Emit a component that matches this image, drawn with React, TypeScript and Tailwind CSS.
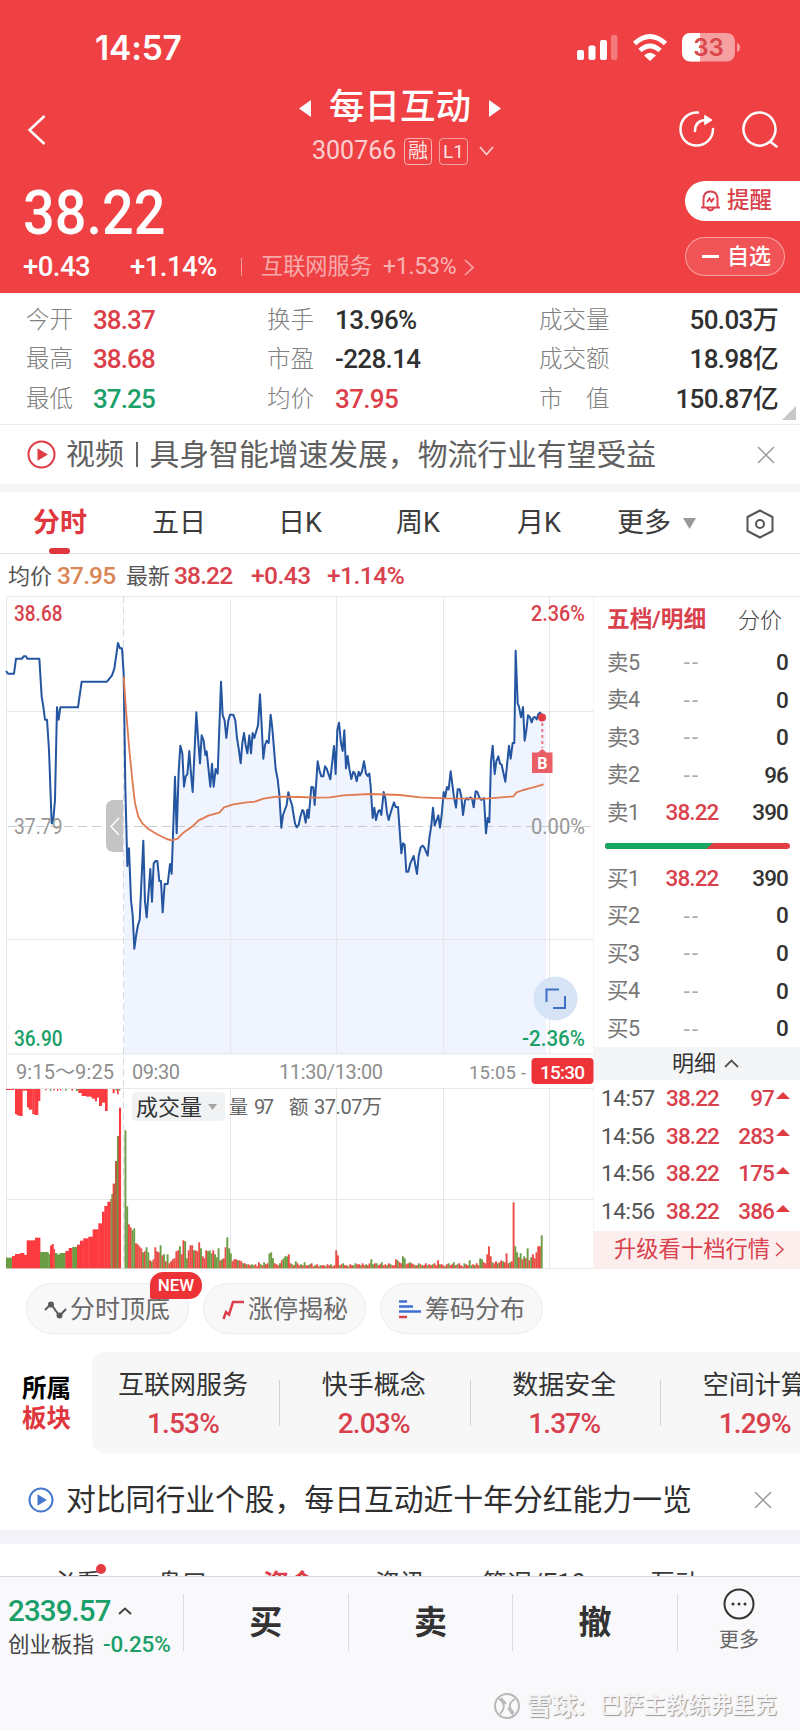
import React from "react";

const RED = "#d9414d";
const GREEN = "#1ba06a";

const font = "font-[Roboto,'Noto_Sans_CJK_SC',sans-serif]";

const stats = [
  ["今开", "38.37", "text-[#dc3f4a]", "换手", "13.96%", "text-[#303030]", "成交量", "50.03万"],
  ["最高", "38.68", "text-[#dc3f4a]", "市盈", "-228.14", "text-[#303030]", "成交额", "18.98亿"],
  ["最低", "37.25", "text-[#1ba06a]", "均价", "37.95", "text-[#dc3f4a]", "市　值", "150.87亿"],
];

const sells = [
  ["卖5", "--", "0"],
  ["卖4", "--", "0"],
  ["卖3", "--", "0"],
  ["卖2", "--", "96"],
  ["卖1", "38.22", "390"],
];

const buys = [
  ["买1", "38.22", "390"],
  ["买2", "--", "0"],
  ["买3", "--", "0"],
  ["买4", "--", "0"],
  ["买5", "--", "0"],
];

const trades = [
  ["14:57", "97"],
  ["14:56", "283"],
  ["14:56", "175"],
  ["14:56", "386"],
];

const sectors = [
  ["互联网服务", "1.53%"],
  ["快手概念", "2.03%"],
  ["数据安全", "1.37%"],
  ["空间计算", "1.29%"],
];

// price curve, in thirds of a pixel
const price =
  "M18 243 L24 251 H42 L48 206 H66 L71 199 H78 L82 206 H118 L125 320 L130 350 L135 389 H141 L147 480 L155 700 H159 L165 630 L171 352 L176 389 L181 352 H234 L245 275 H321 L336 256 L343 236 L354 159 L360 175 H366 L371 250 L376 590 L382 828 L387 775 L393 930 L398 975 L403 1076 L409 1032 L414 1005 L419 990 L430 752 L435 935 L440 982 L451 837 L456 935 L461 820 L467 813 H472 L478 873 H483 L488 967 L494 882 H503 L510 822 L515 851 L525 560 L530 730 L536 545 L541 467 L547 490 L552 590 L557 559 L562 553 L568 483 L573 552 L578 606 L589 367 L594 443 L600 520 L605 436 L611 452 L616 495 L620 484 L631 590 L636 521 L641 590 L647 537 L653 551 L663 275 L668 375 L674 392 L679 444 L685 392 L690 374 H700 L706 392 L711 444 L716 475 L722 520 L727 459 L732 429 L737 465 L742 490 L748 436 L753 490 L758 429 L763 444 L774 406 L780 313 L785 406 L790 506 L795 465 L800 452 L806 459 L812 374 L817 415 L827 537 L833 568 L838 613 L844 713 L849 675 L860 645 L865 607 L871 630 L876 645 L885 700 L890 712 L896 705 L901 680 L907 660 L911 664 L917 698 L922 659 L926 684 L934 591 L940 592 L944 645 L953 514 L959 544 L964 559 L970 559 L975 529 L980 536 L991 568 L1002 468 L1007 552 L1012 420 L1017 398 L1023 459 L1028 483 L1033 421 L1038 535 L1043 498 L1048 536 L1054 567 L1060 545 L1065 551 L1070 574 L1076 545 L1080 557 L1086 544 L1092 514 L1098 551 L1103 558 L1108 551 L1112 590 L1118 684 L1123 653 L1128 690 L1134 665 L1139 660 L1144 675 L1151 606 L1156 625 L1161 668 L1166 690 L1172 668 L1177 652 L1182 637 L1187 651 H1194 L1204 790 L1209 760 L1214 765 L1219 845 H1225 L1231 820 L1241 798 L1251 852 L1256 798 L1262 772 L1268 767 L1273 773 L1283 797 L1288 745 L1294 706 L1299 653 L1304 706 L1315 676 L1320 713 L1325 675 L1331 606 L1335 624 L1341 591 L1346 598 L1352 544 L1357 583 L1362 622 L1368 653 L1373 598 H1379 L1384 620 L1389 675 L1395 632 L1400 624 L1405 629 L1411 622 L1416 626 L1421 652 L1427 604 L1432 606 L1438 622 L1444 630 L1452 624 L1458 730 L1463 684 L1468 697 L1473 514 L1478 467 L1484 552 L1489 514 L1495 499 L1500 521 L1505 524 L1516 575 L1527 467 L1532 506 L1538 459 H1543 L1547 182 L1553 340 L1557 350 L1563 382 L1569 351 L1574 452 L1579 421 L1584 376 L1590 382 L1595 397 L1600 383 L1605 381 L1610 388 L1615 372 L1621 368 L1627 383";

const average =
  "M371 260 L378 360 L388 480 L398 580 L405 640 L415 680 L427 700 L445 717 L470 732 L500 747 L515 751 L533 746 L550 728 L580 707 L595 692 L625 677 L658 668 L672 652 L700 643 L740 637 L765 635 L790 626 L830 620 L900 621 L950 623 L990 622 L1030 616 L1110 612 L1200 615 L1260 622 L1340 625 L1460 626 L1540 619 L1550 607 L1570 600 L1600 592 L1631 583";

// call auction volume: [left, right, height, tone], thirds of a pixel
const auction: [number, number, number, string][] = [
  [18, 36, 32, "g"], [36, 45, 37, "r"], [45, 60, 43, "r"], [60, 72, 46, "r"], [72, 80, 40, "r"],
  [80, 105, 84, "r"], [105, 120, 92, "r"], [120, 145, 49, "g"], [145, 150, 43, "g"], [150, 155, 68, "r"],
  [155, 160, 73, "r"], [160, 164, 58, "r"], [164, 170, 46, "g"], [170, 180, 42, "g"], [180, 196, 46, "g"],
  [196, 206, 52, "r"], [206, 217, 61, "r"], [217, 231, 64, "g"], [231, 240, 71, "r"], [240, 250, 83, "r"],
  [250, 265, 90, "r"], [265, 278, 95, "r"], [278, 295, 117, "r"], [295, 306, 135, "r"], [306, 313, 170, "r"],
  [313, 322, 187, "r"], [322, 331, 200, "r"], [331, 334, 208, "m"], [334, 338, 223, "g"], [338, 341, 254, "r"],
  [341, 345, 254, "m"], [345, 351, 322, "m"], [351, 354, 397, "g"], [354, 357, 397, "m"], [357, 362, 482, "r"],
];

// unmatched auction volume, drawn down from the top edge
const unmatched: [number, number, number, string][] = [
  [18, 42, 3, "r"], [45, 50, 75, "r"], [50, 57, 79, "r"], [57, 67, 81, "r"], [68, 80, 5, "r"],
  [81, 86, 55, "r"], [86, 97, 62, "r"], [97, 103, 75, "r"], [103, 114, 78, "r"], [114, 120, 36, "r"],
  [136, 139, 4, "r"], [150, 153, 6, "g"], [160, 164, 4, "r"], [171, 174, 6, "r"], [180, 183, 4, "r"],
  [195, 199, 5, "g"], [214, 218, 5, "r"], [228, 233, 6, "g"], [235, 245, 12, "r"], [245, 258, 21, "r"],
  [258, 275, 23, "r"], [275, 285, 29, "r"], [285, 290, 37, "r"], [290, 297, 26, "r"], [297, 305, 51, "r"],
  [305, 315, 41, "r"], [315, 322, 66, "r"], [338, 343, 13, "r"], [347, 350, 5, "g"], [351, 355, 16, "r"],
  [357, 360, 5, "g"],
];

const tones: Record<string, string> = { r: "#fb3b40", g: "#6b9d45", m: "#b5623f" };

// one bar per minute, negative is a falling minute
const minutes = [
  -138, -62, 44, 41, -38, -40, 25, 24, 22, 20, -16, 17, -21, -16, 8, -7, 9, 21, 17, 16, -23, 13, -14, 7, -14, 5, 7, 9, 10,
  17, 18, -22, 14, 28, -27, -10, 18, 23, 23, -18, 18, 17, 26, -20, 12, 10, 18, -17, -18, -15, 18, -14, -11, -20, 8, -9, 10,
  21, -31, -20, -15, 7, 9, 9, -8, 8, 7, -5, 5, -4, 4, 3, -4, -3, 4, 2, 6, -4, 3, -6, 4, 5, -15, -16, -10, 5, 4, 3, -5, 8,
  -10, -12, -12, 14, 5, -4, 3, -7, 5, 3, -4, 3, -6, 3, 3, -4, 5, 2, -3, 4, 2, -3, 3, 3, -2, 4, 3, -4, 2, 3, 18, 13, -3, 4,
  -5, 3, 3, -2, 4, 3, -3, -5, 4, 4, -3, 5, 3, -4, 3, 5, -9, -4, 5, -5, 3, 4, -6, 3, 4, -3, 5, -4, 3, 3, 9, -8, 6, 5, -12,
  -10, 4, 5, -6, 5, 4, -3, 3, -5, 4, -3, 3, 5, -3, 4, 3, -4, 5, 3, 8, -4, 4, 3, -2, 4, -5, 3, 4, -6, 3, -4, 5, 3, 2, -5, 4,
  3, -8, -3, 4, -3, 5, 3, -10, -9, 6, 5, 14, 22, 12, -6, 5, 7, -5, 6, 8, -7, 6, 15, 5, -6, 7, 66, -22, -16, 11, -15, 9,
  -12, 10, -20, 8, -11, 14, 10, 16, 22, 22, -33,
];

function Chart() {
  const line = { fill: "none", stroke: "#e6e7e9", strokeWidth: 1 };
  return (
    <svg
      className="block shrink-0"
      width="594"
      height="680"
      viewBox="0 0 594 680"
      fontFamily="Roboto,'Noto Sans CJK SC',sans-serif"
    >
      <clipPath id="session">
        <rect x="371" y="0" width="1270" height="1392" />
      </clipPath>
      <path d={`${price} H1638 V1392 H371 V250Z`} transform="scale(.33333)" fill="#f0f4ff" clipPath="url(#session)" />
      <path {...line} d="M6.5 6.5H594V678.5H6.5ZM6 121.5H594M6 349.5H594M6 464H594M6 498.5H594M6 609.5H594" />
      <path {...line} d="M230.5 10V464M336.5 6V464M443.5 6V464M549.5 6V464M230.5 498V678M336.5 498V678M443.5 498V678M549.5 498V678" />
      <path d="M123.5 6V680" fill="none" stroke="#d9dadd" strokeDasharray="7 4" />
      <path d="M8 236.5H590" fill="none" stroke="#c9cbd0" strokeDasharray="9 5" />

      <path d="M123 210V262H114Q106 262 106 254V218Q106 210 114 210Z" fill="#c4c4c4" />
      <path d="M119 228L111 236.500L119 245" fill="none" stroke="#fff" strokeWidth="1.500" />
      <g transform="scale(.33333)" fill="none" strokeLinejoin="round">
        <path d={price} stroke="#2455a0" strokeWidth="6" />
        <path d={average} stroke="#e07a52" strokeWidth="5.500" />
      </g>

      <g fontSize="22" fontWeight="500" lengthAdjust="spacingAndGlyphs">
        <text x="14" y="31" fill={RED} textLength="48.500" lengthAdjust="spacingAndGlyphs">38.68</text>
        <text x="531" y="31" fill={RED} textLength="54" lengthAdjust="spacingAndGlyphs">2.36%</text>
        <text x="14" y="243.500" fill="#999" fontWeight="400" textLength="48.500" lengthAdjust="spacingAndGlyphs">37.79</text>
        <text x="531" y="243.500" fill="#999" fontWeight="400" textLength="54" lengthAdjust="spacingAndGlyphs">0.00%</text>
        <text x="14" y="456" fill={GREEN} textLength="48.500" lengthAdjust="spacingAndGlyphs">36.90</text>
        <text x="522" y="456" fill={GREEN} textLength="63" lengthAdjust="spacingAndGlyphs">-2.36%</text>
      </g>

      <path d="M542.300 133V158" stroke="#e8777e" strokeWidth="2" strokeDasharray="3 3" />
      <circle cx="542" cy="127.600" r="4" fill="#e23b42" />
      <path d="M532 162.500H538L542.300 159L546.500 162.500H552.500V183H532Z" fill="#ea5f66" />
      <text x="542.300" y="178.500" fill="#fff" fontSize="16" fontWeight="700" textAnchor="middle">B</text>

      <circle cx="555.500" cy="408.500" r="22" fill="#cfdff5" opacity=".85" />
      <path d="M546.500 412V399.500H559M565 406V418H553" fill="none" stroke="#3f70c4" strokeWidth="2" />

      <g fill="#8e8e8e" fontSize="20">
        <text x="16" y="489" textLength="98">9:15～9:25</text>
        <text x="132" y="489" textLength="48">09:30</text>
        <text x="279" y="489" textLength="104">11:30/13:00</text>
        <text x="469" y="488.500" textLength="57" fontSize="18.500">15:05 -</text>
      </g>
      <rect x="531.500" y="468" width="62" height="26" rx="4" fill="#ee3338" />
      <text x="540" y="488.500" fill="#fff" fontSize="19" fontWeight="500" textLength="45">15:30</text>

      <g transform="scale(.33333)">
        {auction.map(([l, r, h, t]) => (
          <rect key={l} x={l} y={2035 - h} width={r - l + 1.2} height={h} fill={tones[t]} />
        ))}
        {unmatched.map(([l, r, h, t]) => (
          <rect key={l} x={l} y="1497" width={r - l + 1} height={h} fill={tones[t]} />
        ))}
      </g>
      {minutes.map((v, i) => (
        <rect
          key={i}
          x={124.5 + (i * 418) / minutes.length}
          y={678.3 - Math.abs(v)}
          width="1.900"
          height={Math.abs(v)}
          fill={v < 0 ? tones.g : "#ea4b45"}
        />
      ))}

      <rect x="132" y="502" width="93" height="29" rx="4" fill="#f1f2f4" />
      <text x="136" y="525" fill="#333" fontSize="22">成交量</text>
      <path d="M208 514H217L212.500 520Z" fill="#a5a5a5" />
      <text x="229" y="524" fill="#666" fontSize="19">量</text>
      <text x="254" y="524" fill="#666" fontSize="20" textLength="20">97</text>
      <text x="289" y="524" fill="#666" fontSize="19.500">额</text>
      <text x="314" y="524" fill="#666" fontSize="20" textLength="68">37.07万</text>
    </svg>
  );
}

function Level({ row }: { row: string[] }) {
  const empty = row[1] === "--";
  return (
    <div className="flex h-[37.6px] items-center pl-[13px] pr-[12px] text-[22.500px]">
      <span className="w-[36px] whitespace-nowrap text-[21.500px] tracking-[-0.02em] text-[#777]">{row[0]}</span>
      <span
        className={
          empty
            ? "w-[98px] text-center text-[22px] tracking-[0.1em] text-[#aaa]"
            : "w-[98px] text-center font-medium tracking-[-0.04em] text-[#d9414d]"
        }
      >
        {row[1]}
      </span>
      <span className="flex-1 text-right font-medium tracking-[-0.04em] text-[#333]">{row[2]}</span>
    </div>
  );
}

function Close() {
  return (
    <svg width="18" height="18" viewBox="0 0 18 18" fill="none" stroke="#999" strokeWidth="1.500">
      <path d="M1 1L17 17M17 1L1 17" />
    </svg>
  );
}

function Header() {
  return (
    <header className="h-[293px] shrink-0 bg-[#ef4143] text-white">
      <div className="flex h-[95px] items-center pl-[95px] pr-[60px]">
        <span className="pt-px font-[Inter] text-[33.500px] font-semibold tracking-[-0.005em]">14:57</span>
        <svg className="ml-auto" width="163" height="34" viewBox="576 31 163 34" fill="#fff">
          <rect x="576" y="50" width="7" height="10" rx="2" />
          <rect x="587.500" y="45.500" width="7" height="14.500" rx="2" />
          <rect x="599" y="40" width="7" height="20" rx="2" />
          <rect x="610" y="35" width="6.500" height="25" rx="2" opacity=".3" />
          <g fill="none" stroke="#fff" strokeWidth="5">
            <path d="M633.500 43.500Q649 29.500 664.500 43.500" />
            <path d="M639 50.500Q649 41.500 659 50.500" />
          </g>
          <path d="M643 55.500Q649 50 655 55.500L649 61Z" />
          <path d="M690 33H725Q734 33 734 42V52Q734 61.500 725 61.500H690Q681 61.500 681 52V42Q681 33 690 33Z" opacity=".5" />
          <path d="M699 33H690Q681 33 681 42V52Q681 61.500 690 61.500H699Z" />
          <path d="M736 43Q739 44 739 47.500T736 52Z" opacity=".5" />
          <text x="707.500" y="56" fill="#d9474b" fontFamily="Inter" fontSize="24" fontWeight="600" textAnchor="middle">33</text>
        </svg>
      </div>

      <div className="flex h-[80px] pl-[27px] pr-[22px]">
        <svg className="mt-[19px]" width="20" height="32" viewBox="0 0 20 32" fill="none" stroke="#fff" strokeWidth="2.500">
          <path d="M17.500 2L2.500 16L17.500 30" />
        </svg>
        <div className="ml-[252px] w-[202px]">
          <div className="flex h-[26px] items-center justify-between">
            <svg width="12" height="17" viewBox="0 0 12 17" fill="#fff">
              <path d="M12 0V17L0 8.500Z" />
            </svg>
            <span className="whitespace-nowrap text-[35.500px] font-medium leading-none">每日互动</span>
            <svg width="12" height="17" viewBox="0 0 12 17" fill="#fff">
              <path d="M0 0V17L12 8.500Z" />
            </svg>
          </div>
          <div className="mt-[15px] flex h-[30px] items-center pl-[13px]">
            <span className="w-[92px] text-[25px] opacity-75">300766</span>
            <span className="flex h-[27px] w-[28px] items-center justify-center rounded-[4px] border border-white/70 text-[20px] leading-none opacity-85">融</span>
            <span className="ml-[7px] flex h-[27px] w-[29px] items-center justify-center rounded-[4px] border border-white/60 text-[19px] leading-none opacity-85">L1</span>
            <svg className="ml-[11px] shrink-0" width="15" height="10" viewBox="0 0 15 10" fill="none" stroke="#fbd0d0" strokeWidth="1.800">
              <path d="M1 1L7.500 8.500L14 1" />
            </svg>
          </div>
        </div>
        <svg className="ml-auto mt-[14px]" width="101" height="40" viewBox="676 109 101 40" fill="none" stroke="#fff" strokeWidth="2.500" strokeLinecap="round">
          <path d="M697 112.500C687 112 679.500 119.500 679.500 129S686.500 145.500 695.500 145.500S712 138.500 712 129" />
          <path d="M694 131Q694 120 706 120" />
          <path d="M704 115.500L711 120L704 124.500Z" fill="#fff" strokeWidth="1" />
          <path d="M769 141.500A16 16.500 0 1 1 773 136Q772 139 769 141.500L775.500 146.500" />
        </svg>
      </div>

      <div className="flex h-[118px] justify-between">
        <div className="pl-[23px]">
          <div className="h-[74px] origin-left scale-x-[0.9] pt-[7px] text-[62px] font-medium leading-none">38.22</div>
          <div className="flex h-[36px] items-center whitespace-nowrap text-[27.500px] font-medium tracking-[-0.02em]">
            <span className="w-[107px]">+0.43</span>
            <span className="w-[111px]">+1.14%</span>
            <span className="h-[18px] w-px bg-white/50" />
            <span className="ml-[19px] w-[122px] text-[22.200px] font-normal tracking-normal opacity-55">互联网服务</span>
            <span className="w-[81px] text-[23px] font-normal tracking-[-0.01em] opacity-60">+1.53%</span>
            <svg width="10" height="17" viewBox="0 0 10 17" fill="none" stroke="#f9a9aa" strokeWidth="1.600">
              <path d="M1 1L9 8.500L1 16" />
            </svg>
          </div>
        </div>
        <div className="w-[115px] pt-[6px]">
          <div className="flex h-[40px] items-center rounded-l-full bg-white pl-[15px] text-[22.500px] font-medium text-[#d9414d]">
            <svg className="mr-[6px]" width="21" height="22" viewBox="0 0 21 22" fill="none" stroke="#d9414d" strokeWidth="1.900">
              <path d="M1 17.500H20M3.500 17V9.500Q3.500 1.500 10.500 1.500T17.500 9.500V17M7 18Q10.500 23 14 18" />
              <path d="M7 12L9.500 8.500L11.500 11.500L14 8" />
            </svg>
            提醒
          </div>
          <div className="mt-[16px] flex h-[39px] w-[100px] items-center rounded-full border border-white/45 bg-white/10 pl-[16px] text-[22px] font-medium">
            <span className="mr-[8px] h-[2.500px] w-[17px] bg-white" />
            自选
          </div>
        </div>
      </div>
    </header>
  );
}

export default function App() {
  return (
    <div className={`flex h-[1731px] w-[800px] flex-col overflow-hidden bg-white ${font}`}>
      <Header />

      <section className="relative h-[132px] shrink-0 border-b border-[#ececee] pt-[8px]">
        {stats.map((s) => (
          <div key={s[0]} className="flex h-[39.300px] items-center whitespace-nowrap pl-[26px] pr-[22px] text-[26px] font-medium tracking-[-0.025em]">
            <span className="w-[67px] text-[23.500px] font-light tracking-normal text-[#808080]">{s[0]}</span>
            <span className={`w-[174px] tracking-[-0.035em] ${s[2]}`}>{s[1]}</span>
            <span className="w-[68px] text-[23.500px] font-light tracking-normal text-[#808080]">{s[3]}</span>
            <span className={`w-[204px] ${s[5]}`}>{s[4]}</span>
            <span className="text-[23.500px] font-light tracking-normal text-[#808080]">{s[6]}</span>
            <span className="ml-auto text-[#303030]">{s[7]}</span>
          </div>
        ))}
        <svg className="absolute right-[4px] bottom-[4px]" width="14" height="14" fill="#c8c8c8">
          <path d="M14 0V14H0Z" />
        </svg>
      </section>

      <section className="flex h-[59px] shrink-0 items-center pl-[27px] pr-[25px]">
        <svg width="29" height="29" viewBox="0 0 29 29" fill="none" stroke="#e03c44" strokeWidth="2">
          <circle cx="14.500" cy="14.500" r="13" />
          <path d="M11.500 10L19 14.500L11.500 19Z" fill="#e03c44" />
        </svg>
        <span className="ml-[10px] w-[58px] whitespace-nowrap pt-[2px] text-[29px] text-[#606060]">视频</span>
        <span className="ml-[12px] h-[25px] w-[1.500px] bg-[#666]" />
        <span className="ml-[12px] flex-1 whitespace-nowrap pt-[2px] text-[29.800px] text-[#606060]">
          具身智能增速发展，物流行业有望受益
        </span>
        <Close />
      </section>
      <div className="h-[8px] shrink-0 bg-[#f5f6f7]" />

      <nav className="flex h-[62px] shrink-0 items-center whitespace-nowrap border-b border-[#e3e4e6] pl-[33px] pt-[2px] text-[27px] text-[#3c3c3c]">
        <span className="relative mr-[65px] font-bold text-[#e0363e]">
          分时
          <i className="absolute -bottom-[10px] left-[16px] h-[6px] w-[21px] rounded-[3px] bg-[#e0363e]" />
        </span>
        <span className="w-[126px]">五日</span>
        <span className="w-[118px]">日K</span>
        <span className="w-[121px]">周K</span>
        <span className="w-[100px]">月K</span>
        <span className="w-[66px]">更多</span>
        <svg width="13" height="11" fill="#999">
          <path d="M0 0H13L6.500 11Z" />
        </svg>
        <svg className="ml-[50px]" width="28" height="30" viewBox="0 0 28 30" fill="none" stroke="#555" strokeWidth="2">
          <path d="M14 1.500L26.500 8V22L14 28.500L1.500 22V8Z" strokeLinejoin="round" />
          <circle cx="14" cy="15" r="4" />
        </svg>
      </nav>

      <div className="flex h-[36px] shrink-0 items-center whitespace-nowrap pl-[8px] pt-[9px] text-[24.500px] font-medium tracking-[-0.035em] text-[#d9414d]">
        <span className="w-[49px] text-[22px] font-normal tracking-normal text-[#555]">均价</span>
        <span className="w-[69px] text-[#d98556]">37.95</span>
        <span className="w-[48px] text-[22px] font-normal tracking-normal text-[#555]">最新</span>
        <span className="w-[77px]">38.22</span>
        <span className="w-[76px] tracking-[-0.02em]">+0.43</span>
        <span className="tracking-[-0.02em]">+1.14%</span>
      </div>

      <section className="flex h-[680px] shrink-0">
        <Chart />
        <aside className="mt-[6px] w-[206px] border-t border-[#e6e7e9]">
          <div className="flex h-[47px] items-center justify-between whitespace-nowrap pl-[13px] pr-[18px] text-[22px] text-[#444]">
            <span className="text-[22.700px] font-bold text-[#d9414d]">五档/明细</span>
            <span className="font-light">分价</span>
          </div>
          {sells.map((r) => (
            <Level key={r[0]} row={r} />
          ))}
          <svg className="my-[11px] ml-[11px] block" width="185" height="6">
            <rect width="185" height="6" rx="3" fill="#e23f45" />
            <path d="M3 0H108L101 6H3A3 3 0 0 1 3 0Z" fill="#18a663" />
          </svg>
          {buys.map((r) => (
            <Level key={r[0]} row={r} />
          ))}
          <div className="-mt-px flex h-[33px] items-center bg-[#f4f5f7] pl-[78px] text-[22px] text-[#333]">
            明细
            <svg className="ml-[8px]" width="15" height="9" viewBox="0 0 15 9" fill="none" stroke="#555" strokeWidth="1.800">
              <path d="M1 8L7.500 1.500L14 8" />
            </svg>
          </div>
          {trades.map((t, i) => (
            <div key={i} className="flex h-[37.700px] items-center pl-[7px] pr-[10px] text-[22.500px] font-medium tracking-[-0.04em] text-[#d9414d]">
              <span className="w-[65px] font-normal tracking-[-0.02em] text-[#555]">{t[0]}</span>
              <span className="w-[60px]">38.22</span>
              <span className="flex-1 text-right">{t[1]}</span>
              <svg className="mb-[7px] ml-[2px]" width="14" height="7" fill="#e03c44">
                <path d="M7 0L14 7H0Z" />
              </svg>
            </div>
          ))}
          <div className="flex h-[38px] items-center whitespace-nowrap bg-[#fdeeee] pl-[20px] text-[22.300px] text-[#d9414d]">
            升级看十档行情
            <svg className="ml-[5px]" width="9" height="15" viewBox="0 0 9 15" fill="none" stroke="#d9414d" strokeWidth="1.500">
              <path d="M1 1L8 7.500L1 14" />
            </svg>
          </div>
        </aside>
      </section>

      <section className="flex h-[82px] shrink-0 gap-[14px] pl-[26px] pt-[13px] text-[25px] text-[#6a6a6a]">
        <div className="relative flex h-[51px] w-[163px] items-center whitespace-nowrap rounded-full border border-[#ececee] bg-[#f8f8f9] pl-[17px] pt-[2px]">
          <svg className="mr-[3px] shrink-0" width="23" height="18" viewBox="0 0 23 18" fill="none" stroke="#5a5a5a" strokeWidth="2">
            <path d="M1 9L7 3L15.500 15L22 8" />
            <circle cx="7" cy="3.500" r="2" fill="#5a5a5a" />
            <circle cx="15.500" cy="14.500" r="2" fill="#5a5a5a" />
          </svg>
          分时顶底
          <span className="absolute -top-[12px] left-[123px] flex h-[27px] w-[52px] items-center justify-center rounded-[13px] rounded-bl-[2px] bg-[#ee3338] text-[17px] font-medium text-white">
            NEW
          </span>
        </div>
        <div className="flex h-[51px] w-[163px] items-center whitespace-nowrap rounded-full border border-[#ececee] bg-[#f8f8f9] pl-[18px] pt-[2px]">
          <svg className="mr-[3px] shrink-0" width="23" height="20" viewBox="0 0 23 20" fill="none" stroke="#dc3f4a" strokeWidth="2.500">
            <path d="M1.500 19L4 12L7 14.500L11 2H22" />
          </svg>
          涨停揭秘
        </div>
        <div className="flex h-[51px] w-[163px] items-center whitespace-nowrap rounded-full border border-[#ececee] bg-[#f8f8f9] pl-[18px] pt-[2px]">
          <svg className="mr-[4px] shrink-0" width="22" height="19" viewBox="0 0 22 19" strokeWidth="2.500" stroke="#3f6fd0">
            <path d="M0 1.500H8M0 6.500H14M0 11.500H22" />
            <path d="M0 17H8" stroke="#d9414d" />
          </svg>
          筹码分布
        </div>
      </section>

      <section className="flex h-[103px] shrink-0 overflow-hidden">
        <div className="flex w-[92px] shrink-0 flex-col pl-[22px] pt-[22px] text-[24.500px] font-bold leading-[29.500px] text-black">
          <span>所属</span>
          <span className="text-[#e0363e]">板块</span>
        </div>
        <div className="flex h-[101px] w-[708px] items-center overflow-hidden rounded-l-[12px] bg-[#f7f7f8]">
          {sectors.map((s, i) => (
            <React.Fragment key={s[0]}>
              {i > 0 && <span className="h-[46px] w-px shrink-0 bg-[#d2d2d4]" />}
              <div className={`${i ? "w-[189.500px] pr-[2px]" : "w-[187px] pr-[5px]"} flex shrink-0 flex-col items-center pt-[4px] text-[26px] text-[#333]`}>
                <span className="h-[39px] leading-[38px]">{s[0]}</span>
                <span className="text-[28px] font-medium leading-[38px] tracking-[-0.03em] text-[#d9414d]">{s[1]}</span>
              </div>
            </React.Fragment>
          ))}
        </div>
      </section>

      <section className="flex h-[75px] shrink-0 items-center pl-[28px] pr-[28px] pt-[14px]">
        <svg width="26" height="26" viewBox="0 0 26 26" fill="none" stroke="#4477cc" strokeWidth="2">
          <circle cx="13" cy="13" r="11.500" />
          <path d="M10.500 9L17 13L10.500 17Z" fill="#4477cc" />
        </svg>
        <span className="ml-[12px] flex-1 whitespace-nowrap pt-[2px] text-[29.800px] text-[#2f2f2f]">
          对比同行业个股，每日互动近十年分红能力一览
        </span>
        <Close />
      </section>
      <div className="h-[14px] shrink-0 bg-[#f3f3f9]" />

      <div className="h-[32px] shrink-0 overflow-hidden">
        <div className="flex h-[80px] items-center whitespace-nowrap pl-[51px] text-[25px] text-[#3a3a3a]">
          <span className="relative w-[106px]">
            必看
            <i className="absolute left-[45px] -top-[1px] h-[10px] w-[10px] rounded-full bg-[#e23b42]" />
          </span>
          <span className="w-[106px]">盘口</span>
          <span className="w-[112px] text-[26px] font-bold text-[#dc3f4a]">资金</span>
          <span className="w-[107px]">资讯</span>
          <span className="w-[168px] tracking-[0.01em]">简况/F10</span>
          <span>互动</span>
        </div>
      </div>

      <footer className="flex flex-1 flex-col border-t border-[#d8d8da] bg-[#f9f9fb]">
        <div className="flex pt-[17px]">
          <div className="w-[183px] whitespace-nowrap pl-[8px]">
            <div className="flex h-[34px] items-center text-[29.500px] font-medium tracking-[-0.03em] text-[#1ba06a]">
              <span className="w-[110px]">2339.57</span>
              <svg width="14" height="8" viewBox="0 0 14 8" fill="none" stroke="#444" strokeWidth="2">
                <path d="M1 7L7 1.500L13 7" />
              </svg>
            </div>
            <div className="flex h-[34px] items-center text-[22.500px] font-medium tracking-[-0.01em] text-[#1ba06a]">
              <span className="w-[95px] text-[21.500px] font-normal tracking-normal text-[#444]">创业板指</span>
              -0.25%
            </div>
          </div>
          {["买", "卖", "撤"].map((t) => (
            <div key={t} className="flex h-[57px] w-[164.600px] items-center justify-center border-l border-[#dcdcde] text-[33px] font-bold text-[#333]">
              {t}
            </div>
          ))}
          <div className="flex h-[57px] flex-1 flex-col items-center border-l border-[#dcdcde] text-[20px] text-[#666]">
            <svg className="-mt-[6px] shrink-0" width="32" height="32" viewBox="0 0 32 32" fill="#333">
              <circle cx="16" cy="16" r="14.500" fill="none" stroke="#333" strokeWidth="2" />
              <circle cx="10" cy="16" r="1.500" />
              <circle cx="16" cy="16" r="1.500" />
              <circle cx="22" cy="16" r="1.500" />
            </svg>
            <span className="mt-[5px] leading-[30px]">更多</span>
          </div>
        </div>
        <div className="mt-[24px] flex h-[40px] items-center justify-end whitespace-nowrap pr-[23px] text-[22.200px] font-medium text-[#f4f4f6] [text-shadow:1px_1px_1px_#999]">
          <svg className="mr-[6px]" width="28" height="28" viewBox="0 0 28 28" fill="none" stroke="#b9b9bb" strokeWidth="2">
            <circle cx="14" cy="14" r="12" />
            <path d="M6 7Q15 13 7 22M22 7Q12 13 21 21M8 6L13 12M15 16L20 23" />
          </svg>
          <span className="w-[73px] text-[25.500px] font-bold">雪球:</span>
          <span>巴萨主教练弗里克</span>
        </div>
      </footer>
    </div>
  );
}
